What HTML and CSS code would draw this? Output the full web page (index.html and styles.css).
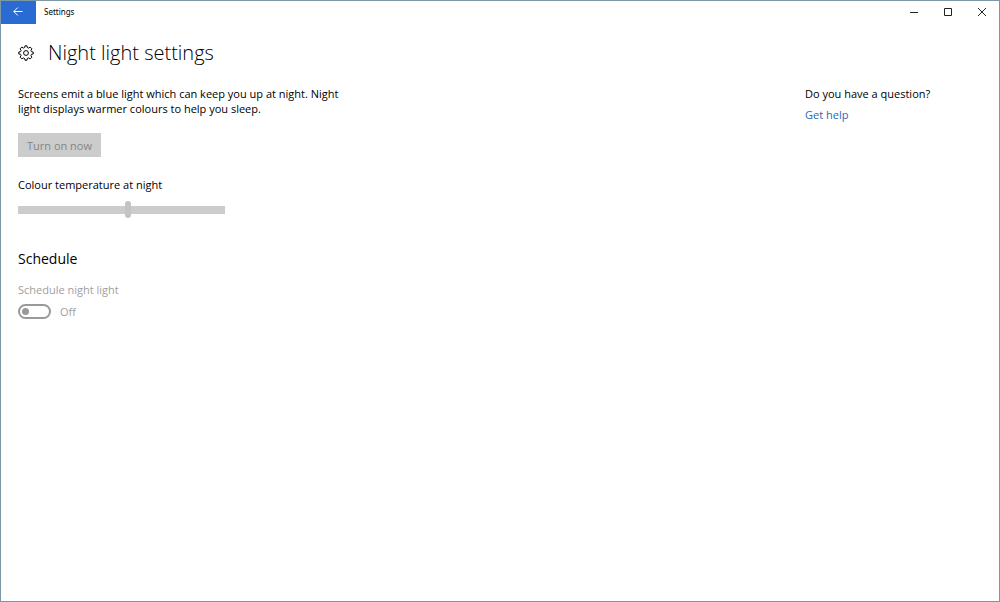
FILE: index.html
```html
<!DOCTYPE html>
<html lang="en-GB">

<head>
    <meta charset="utf-8">
    <meta name="viewport" content="width=device-width, initial-scale=1.0">
    <title>Settings</title>
    <link rel="stylesheet" href="styles.css">
</head>

<body>
    <div class="window">

        <!-- Title bar -->
        <header class="titlebar">
            <button class="back" aria-label="Back">
                <svg width="11" height="11" viewBox="0 0 11 11"><path d="M9.5 4.5H1M4.8.5l-4 4 4 4" /></svg>
            </button>
            <span class="app-name">Settings</span>
            <div class="window-buttons">
                <button aria-label="Minimise"><svg width="10" height="10" viewBox="0 0 10 10"><path d="M1 5.5h8" /></svg></button>
                <button aria-label="Maximise"><svg width="10" height="10" viewBox="0 0 10 10"><path d="M1.5 1.5h7v7h-7z" /></svg></button>
                <button aria-label="Close"><svg width="10" height="10" viewBox="0 0 10 10"><path d="M1 1l8 8M9 1L1 9" /></svg></button>
            </div>
        </header>

        <div class="page">
            <div class="page-title">
                <svg class="gear" width="16" height="16" viewBox="0 0 16 16">
                    <path d="M6.7 2.5L7 .8h2l.3 1.7 1.4.6 1.5-1 1.7 1.7-1 1.5.6 1.4 1.7.3v2l-1.7.3-.6 1.4 1 1.5-1.7 1.7-1.5-1-1.4.6L9 15.2H7l-.3-1.7-1.4-.6-1.5 1-1.7-1.7 1-1.5-.6-1.4L.8 9V7l1.7-.3.6-1.4-1-1.5 1.7-1.7 1.5 1z" />
                    <circle cx="8" cy="8" r="2.4" />
                </svg>
                <h1>Night light settings</h1>
            </div>

            <div class="columns">
                <main>
                    <p class="intro">Screens emit a blue light which can keep you up at night. Night light displays warmer colours to help you sleep.</p>
                    <button class="turn-on" disabled>Turn on now</button>

                    <label class="slider-label" for="temperature">Colour temperature at night</label>
                    <input class="slider" id="temperature" type="range" min="0" max="100" value="53" disabled>

                    <h2>Schedule</h2>
                    <label class="schedule-label" for="schedule">Schedule night light</label>
                    <div class="switch-row">
                        <input class="switch" id="schedule" type="checkbox" disabled>
                        <span>Off</span>
                    </div>
                </main>

                <aside>
                    <p>Do you have a question?</p>
                    <a href="#help">Get help</a>
                </aside>
            </div>
        </div>

    </div>
</body>

</html>
```

FILE: styles.css
```css
* {
    box-sizing: border-box;
}

body {
    margin: 0;
    background-color: #fff;
    color: #000;
    font-family: "Open Sans", "Noto Sans", sans-serif;
    font-size: 11px;
    line-height: 15px;
}

h1,
h2,
p {
    margin: 0;
}

button {
    border: none;
    padding: 0;
    font: inherit;
}

svg {
    display: block;
    fill: none;
    stroke: currentColor;
}

.window {
    min-height: 100vh;
    border: 1px solid #7d98a5;
}

/* TITLE BAR */

.titlebar {
    display: flex;
    align-items: flex-start;
}

.back {
    display: grid;
    place-items: center;
    width: 35px;
    height: 23px;
    background-color: #2a6bd3;
    color: #fff;
}

.app-name {
    margin-left: 8px;
    font-family: "Noto Sans", sans-serif;
    font-size: 8px;
    line-height: 22px;
}

.window-buttons {
    display: flex;
    margin-left: auto;
}

.window-buttons button {
    display: grid;
    place-items: center;
    width: 34px;
    height: 22px;
    background: none;
    color: #222;
}

/* PAGE */

.page {
    padding: 15px 0 16px 17px;
}

.page-title {
    display: flex;
    align-items: center;
    gap: 14px;
}

h1 {
    font-size: 20px;
    font-weight: 300;
    line-height: 28px;
}

.columns {
    display: flex;
    justify-content: space-between;
    margin-top: 19px;
}

main {
    display: flex;
    flex-direction: column;
    align-items: flex-start;
    width: 336px;
}

.turn-on {
    height: 24px;
    margin-top: 17px;
    padding: 0 9px;
    background-color: #ccc;
    color: #858585;
}

.slider-label {
    margin-top: 20px;
}

.slider {
    appearance: none;
    width: 207px;
    height: 17px;
    margin: 9px 0 0;
    background: none;
}

.slider::-webkit-slider-runnable-track {
    height: 8px;
    background-color: #ccc;
}

.slider::-webkit-slider-thumb {
    appearance: none;
    width: 6px;
    height: 17px;
    margin-top: -5px;
    border-radius: 3px;
    background-color: #c4c4c4;
}

h2 {
    margin-top: 31px;
    font-size: 14px;
    font-weight: 400;
    line-height: 20px;
}

.schedule-label {
    margin-top: 13px;
    color: #a0a0a0;
}

.switch-row {
    display: flex;
    align-items: center;
    gap: 9px;
    margin-top: 7px;
    color: #a0a0a0;
}

.switch {
    appearance: none;
    display: flex;
    align-items: center;
    width: 33px;
    height: 15px;
    margin: 0;
    padding-left: 2px;
    border: 2px solid #999;
    border-radius: 8px;
}

.switch::before {
    content: "";
    width: 7px;
    height: 7px;
    border-radius: 50%;
    background-color: #999;
}

aside {
    width: 194px;
}

aside a {
    display: inline-block;
    margin-top: 6px;
    color: #2868b8;
    text-decoration: none;
}
```
